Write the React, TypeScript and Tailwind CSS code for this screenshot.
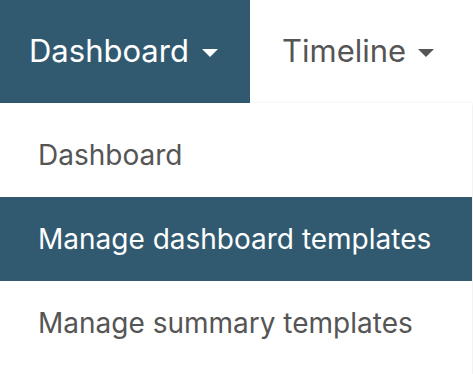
import { useState } from "react";

const items = ["Dashboard", "Manage dashboard templates", "Manage summary templates"];

function Caret({ className }: { className?: string }) {
  return (
    <svg width="16" height="8" viewBox="0 0 16 8" className={className} aria-hidden>
      <path d="M0 0h16L8 8z" fill="currentColor" />
    </svg>
  );
}

export default function App() {
  const [active, setActive] = useState(1);

  return (
    <div className="relative h-[374px] w-[473px] overflow-hidden bg-white font-['Inter',sans-serif]">
      <nav className="flex h-[103px]">
        <button
          type="button"
          className="flex w-[250px] items-center gap-[13px] bg-[#315a71] pl-[29px] text-[31px] text-white"
        >
          Dashboard
          <Caret className="mt-[3px]" />
        </button>
        <button
          type="button"
          className="flex items-center gap-[12px] pl-[32px] text-[31px] text-[#555]"
        >
          Timeline
          <Caret className="mt-[3px]" />
        </button>
      </nav>

      <ul className="absolute left-0 top-[103px] w-[472px] bg-white py-[10px] shadow-[0_1px_4px_rgba(0,0,0,0.12)]">
        {items.map((label, idx) => (
          <li key={label}>
            <button
              type="button"
              onClick={() => setActive(idx)}
              className={
                idx === active
                  ? "flex h-[84px] w-full items-center bg-[#315a71] pl-[38px] text-[28px] text-white"
                  : "flex h-[84px] w-full items-center pl-[38px] text-[28px] text-[#555]"
              }
            >
              {label}
            </button>
          </li>
        ))}
      </ul>
    </div>
  );
}
